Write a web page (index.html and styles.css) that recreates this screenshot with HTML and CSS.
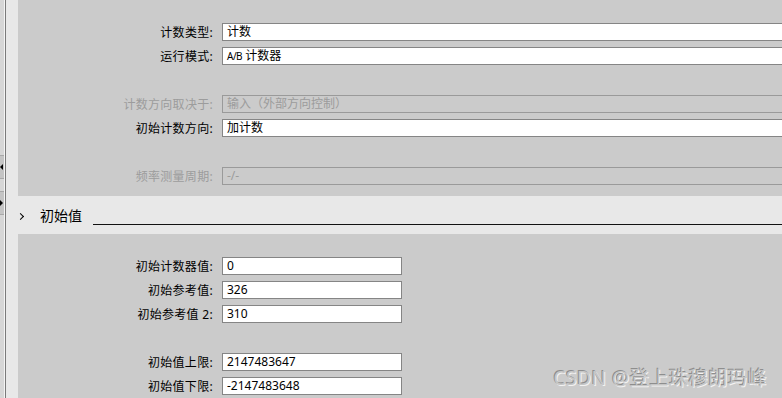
FILE: index.html
```html
<!DOCTYPE html>
<html lang="zh-CN">
<head>
  <meta charset="UTF-8">
  <title>计数器参数</title>
  <link rel="stylesheet" href="styles.css">
</head>
<body>
  <div class="page">
    <!-- 左侧折叠条 -->
    <aside class="side">
      <div class="side-strip">
        <span class="side-btn side-btn-left"></span>
        <span class="side-btn side-btn-right"></span>
      </div>
      <div class="side-line"></div>
      <div class="side-pad"></div>
    </aside>

    <main class="main">
      <section class="panel panel-top">
        <div class="row">
          <label>计数类型:</label>
          <div class="field wide">计数</div>
        </div>
        <div class="row">
          <label>运行模式:</label>
          <div class="field wide"><span class="small">A/B</span> 计数器</div>
        </div>
        <div class="row empty"></div>
        <div class="row disabled">
          <label>计数方向取决于:</label>
          <div class="field wide">输入（外部方向控制）</div>
        </div>
        <div class="row">
          <label>初始计数方向:</label>
          <div class="field wide">加计数</div>
        </div>
        <div class="row empty"></div>
        <div class="row disabled">
          <label>频率测量周期:</label>
          <div class="field wide">-/-</div>
        </div>
      </section>

      <div class="section-head">
        <span class="chevron"></span>
        <span class="section-title">初始值</span>
        <span class="section-rule"></span>
      </div>

      <section class="panel panel-bottom">
        <div class="row">
          <label>初始计数器值:</label>
          <div class="field">0</div>
        </div>
        <div class="row">
          <label>初始参考值:</label>
          <div class="field">326</div>
        </div>
        <div class="row">
          <label>初始参考值 2:</label>
          <div class="field">310</div>
        </div>
        <div class="row empty"></div>
        <div class="row">
          <label>初始值上限:</label>
          <div class="field">2147483647</div>
        </div>
        <div class="row">
          <label>初始值下限:</label>
          <div class="field">-2147483648</div>
        </div>
      </section>
    </main>

    <div class="watermark">CSDN @登上珠穆朗玛峰</div>
  </div>
</body>
</html>
```

FILE: styles.css
```css
html, body {
  margin: 0;
  height: 100%;
  overflow: hidden;
}

body {
  font-family: "Noto Sans", "Noto Sans CJK SC", sans-serif;
  font-size: 12px;
  color: #000;
  background-color: #cbcbcb;
}

.page {
  position: relative;
  display: flex;
  height: 398px;
}

/* 左侧 */
.side {
  display: flex;
  width: 18px;
  flex-shrink: 0;
}

.side-strip {
  width: 4px;
  background-color: #d6d6d6;
  border-right: 1px solid #f4f4f4;
  display: flex;
  flex-direction: column;
  padding-top: 155px;
  gap: 12px;
}

.side-btn {
  position: relative;
  height: 22px;
  background-color: #c4c4c4;
  border-top: 1px solid #a8a8a8;
  border-bottom: 1px solid #a8a8a8;
}

.side-btn::before {
  content: "";
  position: absolute;
  top: 8px;
  border-top: 3px solid transparent;
  border-bottom: 3px solid transparent;
}

.side-btn-left::before {
  left: 0;
  border-right: 3px solid #000;
}

.side-btn-right::before {
  left: 0;
  border-left: 3px solid #000;
}

.side-line {
  width: 1px;
  background-color: #7a7a7a;
}

.side-pad {
  flex: 1;
  background-color: #e8e8e8;
}

/* 主区域 */
.main {
  flex: 1;
  display: flex;
  flex-direction: column;
  min-width: 0;
}

.panel {
  background-color: #cbcbcb;
  padding-top: 23px;
  display: flex;
  flex-direction: column;
  gap: 6px;
}

.panel-top {
  height: 173px;
}

.panel-bottom {
  flex: 1;
}

.row {
  display: grid;
  grid-template-columns: 195px auto;
  column-gap: 9px;
  height: 18px;
  align-items: center;
}

.row label {
  text-align: right;
  white-space: nowrap;
  letter-spacing: 0.3px;
}

.field {
  box-sizing: border-box;
  height: 18px;
  width: 180px;
  border: 1px solid #858585;
  background-color: #fff;
  padding: 0 4px;
  line-height: 16px;
  white-space: nowrap;
  overflow: hidden;
}

.field.wide {
  width: 600px;
}

.small {
  font-size: 10px;
  letter-spacing: -0.5px;
}

.row.disabled label {
  color: #9c9c9c;
}

.row.disabled .field {
  background-color: #cbcbcb;
  border-color: #9a9a9a;
  color: #9c9c9c;
}

/* 分组标题 */
.section-head {
  height: 38px;
  background-color: #e8e8e8;
  display: flex;
  align-items: center;
}

.chevron {
  width: 4px;
  height: 4px;
  margin-left: 0;
  margin-top: 2px;
  border-top: 1.5px solid #000;
  border-right: 1.5px solid #000;
  transform: rotate(45deg);
}

.section-title {
  font-size: 14px;
  margin-left: 17px;
  padding-right: 11px;
}

.section-rule {
  flex: 1;
  height: 1px;
  background-color: #111;
  margin-top: 19px;
}

/* 水印 */
.watermark {
  position: absolute;
  right: 15px;
  bottom: 7px;
  font-size: 19px;
  letter-spacing: 0.6px;
  color: #c6c6c6;
  text-shadow: -1px -1px 0 #8e8e8e, 1px 1px 0 #f2f2f2;
}
```
